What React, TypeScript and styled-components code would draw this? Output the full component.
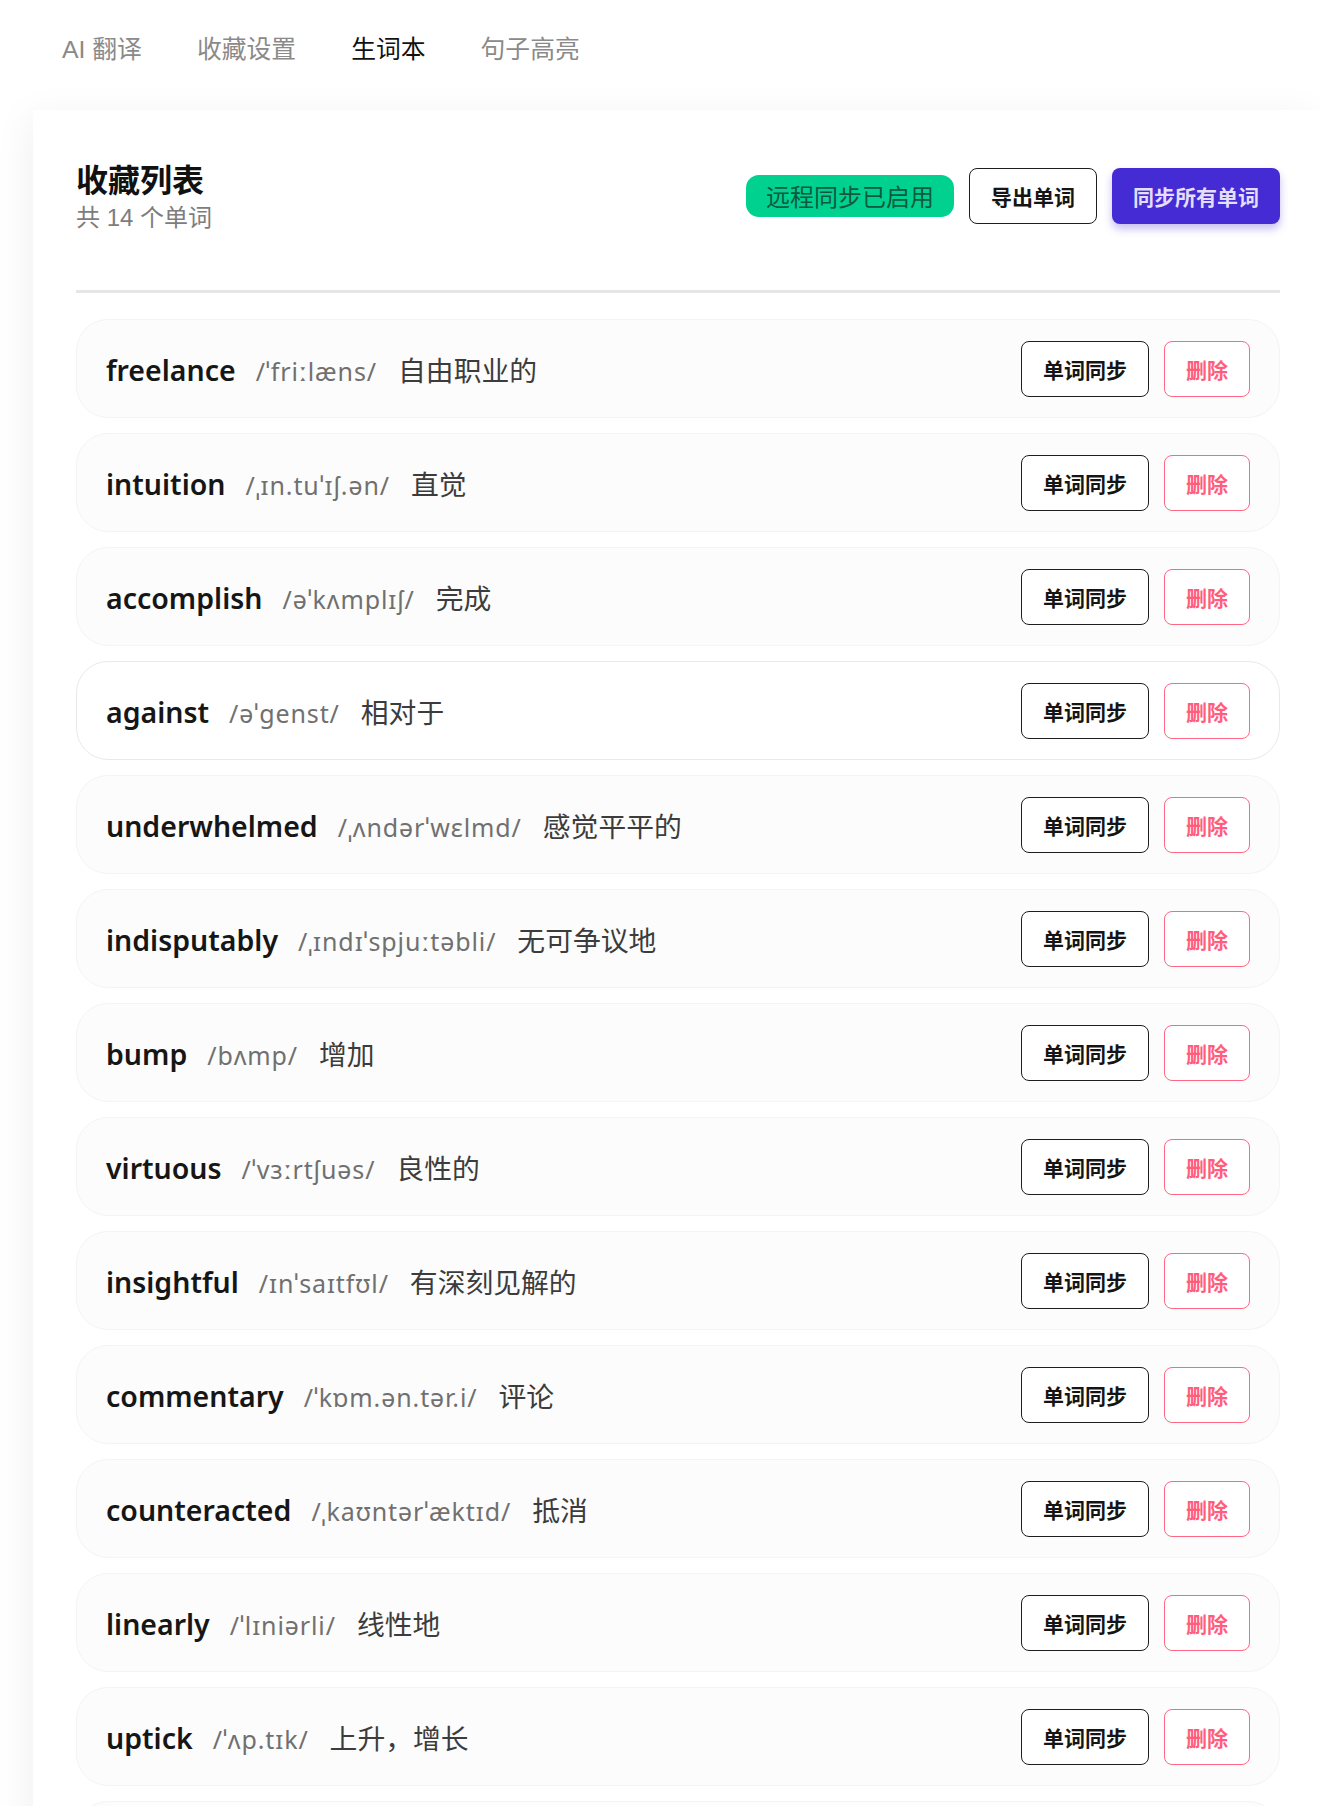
import React from "react";
import styled, { createGlobalStyle } from "styled-components";

const GlobalStyle = createGlobalStyle`
  html, body {
    margin: 0;
    padding: 0;
    background: #ffffff;
    overflow-x: hidden;
  }
  body {
    font-family: "Noto Sans", "Noto Sans CJK SC", sans-serif;
    color: #1a1a1a;
  }
  * { box-sizing: border-box; }
`;

const Page = styled.div`
  display: flex;
  flex-direction: column;
`;

const Nav = styled.nav`
  display: flex;
  gap: 55px;
  padding: 32px 0 0 62px;
`;

const NavItem = styled.span<{ $active?: boolean }>`
  font-family: "Liberation Sans", "Noto Sans CJK SC", sans-serif;
  font-size: 24.8px;
  line-height: 36px;
  color: ${(p) => (p.$active ? "#111111" : "#8a8a8a")};
`;

const Card = styled.section`
  margin: 42px 0 0 33px;
  width: calc(100% - 33px);
  background: #ffffff;
  box-shadow: -4px 6px 36px rgba(0, 0, 0, 0.06);
  padding: 48px 40px 40px 43px;
  min-height: 1700px;
`;

const Header = styled.header`
  display: flex;
  align-items: center;
  justify-content: space-between;
`;

const TitleBlock = styled.div`
  display: flex;
  flex-direction: column;
`;

const Title = styled.h1`
  margin: 0;
  font-family: "Noto Sans CJK SC", sans-serif;
  font-size: 32px;
  line-height: 40px;
  font-weight: 700;
  color: #111111;
`;

const Subtitle = styled.div`
  margin-top: 5px;
  font-family: "Liberation Sans", "Noto Sans CJK SC", sans-serif;
  font-size: 24px;
  line-height: 30px;
  color: #7d7d7d;
`;

const Actions = styled.div`
  display: flex;
  align-items: center;
  gap: 15px;
`;

const Badge = styled.span`
  display: inline-flex;
  align-items: center;
  height: 42px;
  padding: 0 20px;
  border-radius: 13px;
  background: #00d18f;
  color: #0b5a3f;
  font-family: "Noto Sans CJK SC", sans-serif;
  font-size: 24px;
`;

const Button = styled.button<{ $variant?: "outline" | "primary" | "danger" }>`
  display: inline-flex;
  align-items: center;
  justify-content: center;
  height: 56px;
  padding: 0 21px;
  border-radius: 8px;
  font-family: "Noto Sans CJK SC", sans-serif;
  font-size: 21px;
  font-weight: 700;
  cursor: pointer;
  background: ${(p) => (p.$variant === "primary" ? "#452bd3" : "#ffffff")};
  color: ${(p) =>
    p.$variant === "primary" ? "#e4defe" : p.$variant === "danger" ? "#ff5d7b" : "#151515"};
  border: ${(p) =>
    p.$variant === "primary"
      ? "none"
      : p.$variant === "danger"
      ? "1.4px solid #ff6784"
      : "1.4px solid #1e1e1e"};
  box-shadow: ${(p) =>
    p.$variant === "primary" ? "0 5px 8px rgba(69, 43, 211, 0.3)" : "none"};
`;

const Divider = styled.hr`
  margin: 57px 0 26px;
  border: none;
  height: 3px;
  background: #e6e6e6;
`;

const List = styled.div`
  display: flex;
  flex-direction: column;
  gap: 15px;
`;

const Row = styled.div<{ $hover?: boolean }>`
  display: flex;
  align-items: center;
  justify-content: space-between;
  height: 99px;
  padding: 0 29px;
  border-radius: 32px;
  background: ${(p) => (p.$hover ? "#ffffff" : "#fcfcfc")};
  border: 1px solid ${(p) => (p.$hover ? "#e9e9e9" : "#f4f4f4")};
`;

const WordInfo = styled.div`
  display: flex;
  align-items: baseline;
`;

const Word = styled.span`
  font-family: "Noto Sans", sans-serif;
  font-size: 28.5px;
  font-weight: 600;
  color: #161616;
`;

const Phonetic = styled.span`
  margin-left: 20px;
  font-family: "Noto Sans", sans-serif;
  font-size: 25px;
  color: #707070;
  letter-spacing: 0.9px;
`;

const Meaning = styled.span`
  margin-left: 21px;
  font-family: "Noto Sans CJK SC", sans-serif;
  font-size: 27.8px;
  color: #3c3c3c;
`;

const RowActions = styled.div`
  display: flex;
  align-items: center;
  gap: 15px;
`;

type Entry = { word: string; phonetic: string; meaning: string };

const entries: Entry[] = [
  { word: "freelance", phonetic: "/ˈfriːlæns/", meaning: "自由职业的" },
  { word: "intuition", phonetic: "/ˌɪn.tuˈɪʃ.ən/", meaning: "直觉" },
  { word: "accomplish", phonetic: "/əˈkʌmplɪʃ/", meaning: "完成" },
  { word: "against", phonetic: "/əˈgenst/", meaning: "相对于" },
  { word: "underwhelmed", phonetic: "/ˌʌndərˈwɛlmd/", meaning: "感觉平平的" },
  { word: "indisputably", phonetic: "/ˌɪndɪˈspjuːtəbli/", meaning: "无可争议地" },
  { word: "bump", phonetic: "/bʌmp/", meaning: "增加" },
  { word: "virtuous", phonetic: "/ˈvɜːrtʃuəs/", meaning: "良性的" },
  { word: "insightful", phonetic: "/ɪnˈsaɪtfʊl/", meaning: "有深刻见解的" },
  { word: "commentary", phonetic: "/ˈkɒm.ən.tər.i/", meaning: "评论" },
  { word: "counteracted", phonetic: "/ˌkaʊntərˈæktɪd/", meaning: "抵消" },
  { word: "linearly", phonetic: "/ˈlɪniərli/", meaning: "线性地" },
  { word: "uptick", phonetic: "/ˈʌp.tɪk/", meaning: "上升，增长" },
  { word: "resilient", phonetic: "/rɪˈzɪliənt/", meaning: "有韧性的" },
];

export default function App() {
  return (
    <Page>
      <GlobalStyle />
      <Nav>
        <NavItem>AI 翻译</NavItem>
        <NavItem>收藏设置</NavItem>
        <NavItem $active>生词本</NavItem>
        <NavItem>句子高亮</NavItem>
      </Nav>
      <Card>
        <Header>
          <TitleBlock>
            <Title>收藏列表</Title>
            <Subtitle>共 14 个单词</Subtitle>
          </TitleBlock>
          <Actions>
            <Badge>远程同步已启用</Badge>
            <Button $variant="outline">导出单词</Button>
            <Button $variant="primary">同步所有单词</Button>
          </Actions>
        </Header>
        <Divider />
        <List>
          {entries.map((e, i) => (
            <Row key={e.word} $hover={i === 3}>
              <WordInfo>
                <Word>{e.word}</Word>
                <Phonetic>{e.phonetic}</Phonetic>
                <Meaning>{e.meaning}</Meaning>
              </WordInfo>
              <RowActions>
                <Button $variant="outline">单词同步</Button>
                <Button $variant="danger">删除</Button>
              </RowActions>
            </Row>
          ))}
        </List>
      </Card>
    </Page>
  );
}
